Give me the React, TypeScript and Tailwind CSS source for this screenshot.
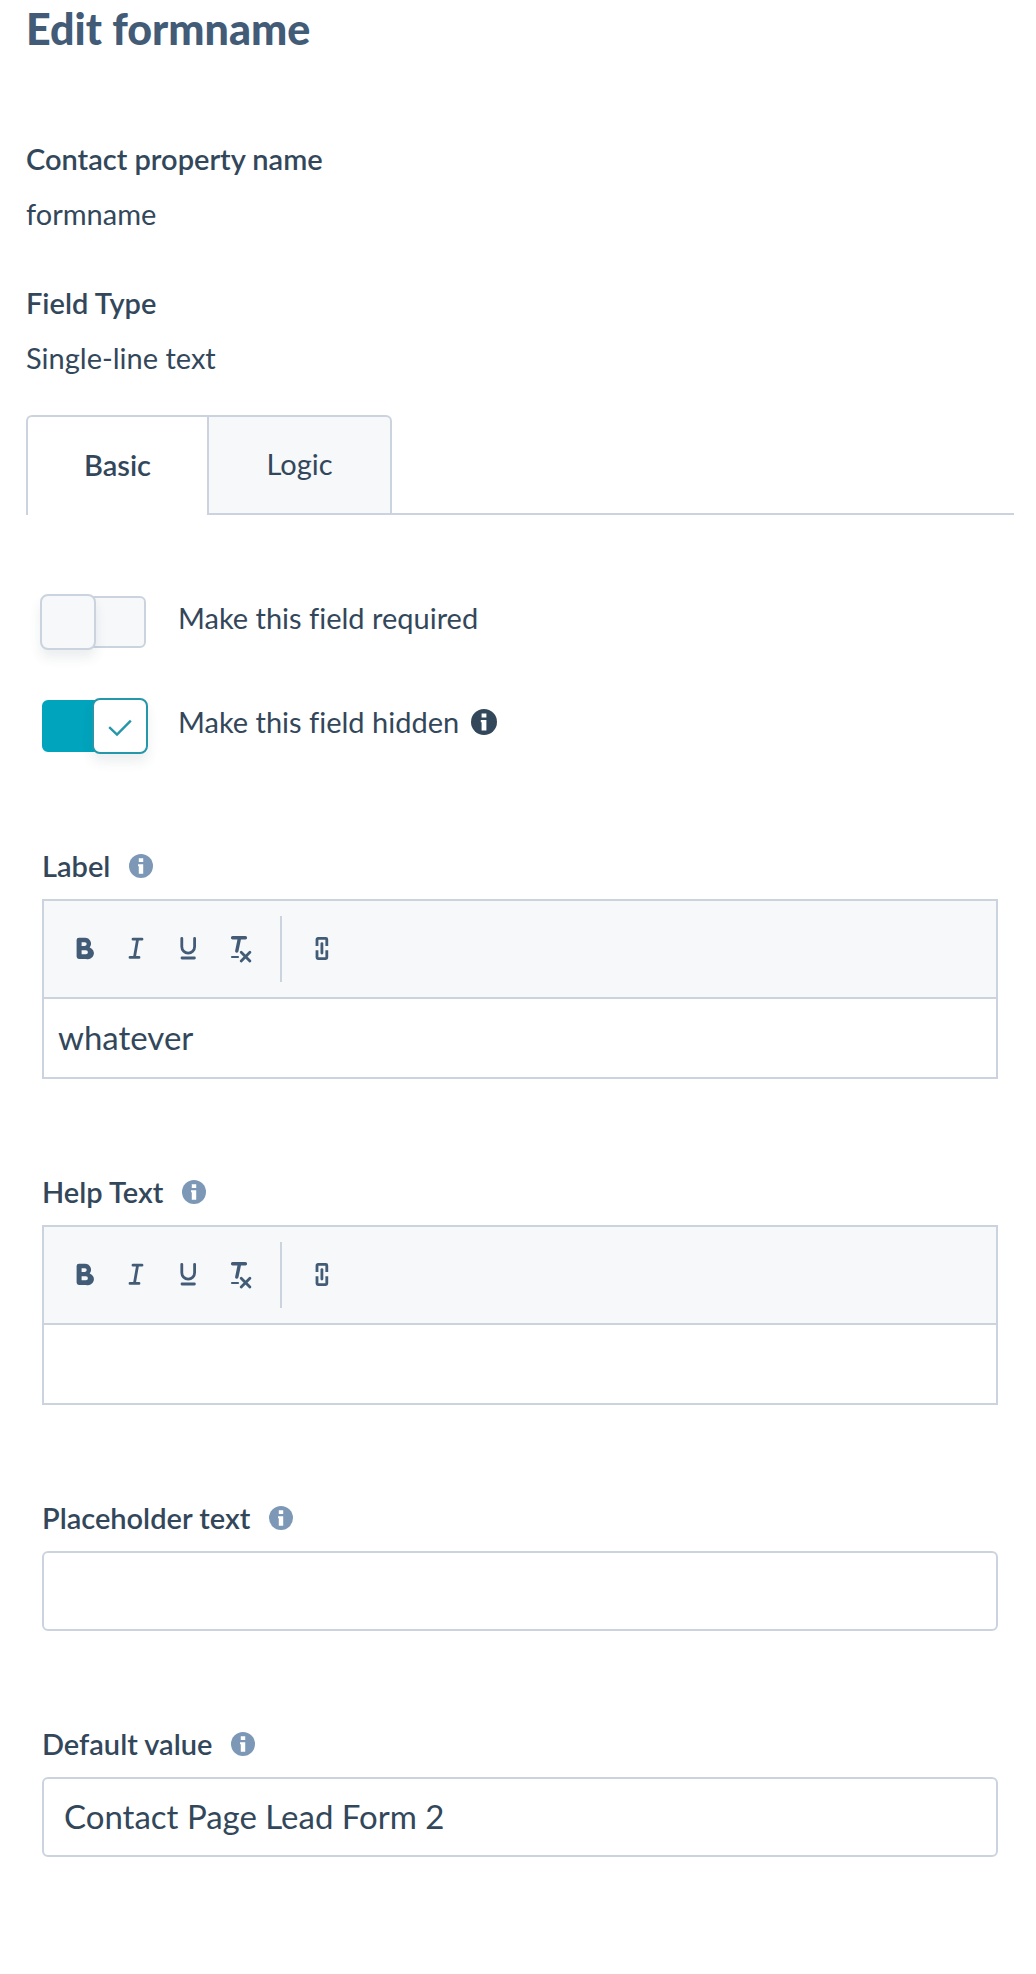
import { useState, type ReactNode } from "react";

function InfoIcon({ className }: { className: string }) {
  return (
    <svg viewBox="0 0 26 26" className={className} aria-hidden="true">
      <circle cx="13" cy="13" r="13" fill="currentColor" />
      <path d="M10.600 4.600h4.800v4h-4.800zM9.800 11h5.600v10.400h-4.800v-8.200h-.8z" fill="#fff" />
    </svg>
  );
}

function Property({ name, value }: { name: string; value: string }) {
  return (
    <div>
      <dt className="font-semibold">{name}</dt>
      <dd>{value}</dd>
    </div>
  );
}

function Toggle({
  id,
  label,
  initial,
  children,
}: {
  id: string;
  label: string;
  initial: boolean;
  children?: ReactNode;
}) {
  const [on, setOn] = useState(initial);
  return (
    <div className="flex items-start gap-[30px]">
      <div className="relative h-14 w-[108px] shrink-0 p-0.5">
        <input
          id={id}
          type="checkbox"
          checked={on}
          onChange={() => setOn(!on)}
          className="block h-[52px] w-[104px] cursor-pointer appearance-none rounded-md border-2 border-[#cbd4de] bg-[#f6f8fa] checked:border-[#00a4bd] checked:bg-[#00a4bd]"
        />
        {on ? (
          <span className="pointer-events-none absolute top-0 right-0 flex size-14 items-center justify-center rounded-lg border-2 border-[#2497aa] bg-white shadow-[0_8px_12px_rgba(45,62,80,0.09)]">
            <svg viewBox="0 0 24 18" className="mt-1 h-[18px] w-6 text-[#2497aa]" fill="none" stroke="currentColor" strokeWidth="2.4" aria-hidden="true">
              <path d="M1.2 8.2 9 15.6 22.8 1.6" />
            </svg>
          </span>
        ) : (
          <span className="pointer-events-none absolute top-0 left-0 size-14 rounded-lg border-2 border-[#cbd4de] bg-[#f6f8fa] shadow-[0_8px_12px_rgba(45,62,80,0.09)]" />
        )}
      </div>
      <div className="flex items-center gap-3 leading-[48px]">
        <label htmlFor={id}>{label}</label>
        {children}
      </div>
    </div>
  );
}

function FieldLabel({ htmlFor, children }: { htmlFor: string; children: string }) {
  return (
    <div className="mb-[11px] flex items-center gap-[19px] leading-[44px]">
      <label htmlFor={htmlFor} className="font-semibold">
        {children}
      </label>
      <button type="button" aria-label={`About ${children}`} className="text-[#7c98b6]">
        <InfoIcon className="size-6" />
      </button>
    </div>
  );
}

const tools = [
  {
    name: "Bold",
    icon: (
      <path
        fill="currentColor"
        fillRule="evenodd"
        stroke="none"
        d="M8 1.700h6a6 6 0 0 1 4.700 9.700A6 6 0 0 1 15 22.900H8a2.400 2.400 0 0 1-2.400-2.400V4.100A2.400 2.400 0 0 1 8 1.700zM10.600 6.300v3.600h3.300a1.800 1.800 0 0 0 0-3.600zM10.600 14.300v4h4.300a2 2 0 0 0 0-4z"
      />
    ),
  },
  {
    name: "Italic",
    icon: <path d="M10 3.200h9M7 21.400h9M14.600 3.200l-3.200 18.200" strokeWidth="2.800" />,
  },
  {
    name: "Underline",
    icon: <path d="M6.800 2.300v8.500a6.400 6.400 0 0 0 12.800 0V2.300M7 22h12.400" strokeWidth="2.800" />,
  },
  {
    name: "Clear formatting",
    icon: (
      <>
        <path d="M5.600 1.700h12.800M12.600 1.700l-2.800 13.300" strokeWidth="3.400" />
        <path d="M5 21h6" strokeWidth="2.200" />
        <path d="m14.200 16.300 8.700 8.800M22.900 16.300l-8.700 8.800" strokeWidth="2.800" />
      </>
    ),
  },
];

function Editor({ id, label, value }: { id: string; label: string; value: string }) {
  return (
    <section>
      <FieldLabel htmlFor={id}>{label}</FieldLabel>
      <div className="border-2 border-[#cbd4de]">
        <div
          role="toolbar"
          aria-label={`${label} formatting`}
          className="flex h-[98px] items-center border-b-2 border-[#cbd4de] bg-[#f6f8fa] pl-[14px] text-[#425b76]"
        >
          {tools.map((tool) => (
            <button key={tool.name} type="button" aria-label={tool.name} className="flex h-12 w-[52px] items-center justify-center">
              <svg viewBox="0 0 26 26" className="size-[26px] overflow-visible" fill="none" stroke="currentColor" strokeLinecap="round" strokeLinejoin="round" aria-hidden="true">
                {tool.icon}
              </svg>
            </button>
          ))}
          <span className="mr-[14px] ml-[14px] h-[66px] w-0.5 bg-[#cbd4de]" />
          <button type="button" aria-label="Link" className="flex h-12 w-[52px] items-center justify-center">
            <svg viewBox="0 0 26 26" className="size-[26px]" fill="none" stroke="currentColor" strokeWidth="2.800" strokeLinejoin="round" aria-hidden="true">
              <path d="M8 10V3.400a1 1 0 0 1 1-1h7.800a1 1 0 0 1 1 1V10M8 14.200v7.400a1 1 0 0 0 1 1h7.800a1 1 0 0 0 1-1v-7.400" />
              <path d="M12.900 7.600v9.400" strokeLinecap="round" />
            </svg>
          </button>
        </div>
        <input id={id} type="text" defaultValue={value} className="block h-[78px] w-full bg-white px-[14px] pb-0.5 text-[33px] outline-none" />
      </div>
    </section>
  );
}

function TextField({ id, label, value }: { id: string; label: string; value: string }) {
  return (
    <section>
      <FieldLabel htmlFor={id}>{label}</FieldLabel>
      <input
        id={id}
        type="text"
        defaultValue={value}
        className="block h-20 w-full rounded-md border-2 border-[#cbd4de] bg-white px-5 pb-0.5 text-[33px] outline-none"
      />
    </section>
  );
}

export default function App() {
  const [tab, setTab] = useState("Basic");
  return (
    <main className="min-h-screen bg-white pt-[3px] pr-[22px] pb-[114px] pl-[26px] font-[Lato,sans-serif] text-[29px] text-[#33475b] [font-variant-ligatures:none]">
      <h1 className="text-[43px] leading-[52px] font-black text-[#425b76]">Edit formname</h1>

      <dl className="mt-[76px] flex flex-col gap-[34px] leading-[55px]">
        <Property name="Contact property name" value="formname" />
        <Property name="Field Type" value="Single-line text" />
      </dl>

      <div role="tablist" className="mt-[30px] flex h-[100px]">
        <button
          type="button"
          role="tab"
          aria-selected={tab === "Basic"}
          onClick={() => setTab("Basic")}
          className="w-[181px] rounded-tl-md border-2 border-r-0 border-[#cbd4de] bg-[#f6f8fa] pb-0.5 aria-selected:border-b-0 aria-selected:bg-white aria-selected:font-semibold"
        >
          Basic
        </button>
        <button
          type="button"
          role="tab"
          aria-selected={tab === "Logic"}
          onClick={() => setTab("Logic")}
          className="w-[185px] rounded-tr-md border-2 border-[#cbd4de] bg-[#f6f8fa] pb-0.5 aria-selected:border-b-0 aria-selected:bg-white aria-selected:font-semibold"
        >
          Logic
        </button>
        <div className="grow border-b-2 border-[#cbd4de]" />
      </div>

      <form className="px-4 pt-[79px]">
        <div className="-ml-0.5 flex flex-col gap-12">
          <Toggle id="required" label="Make this field required" initial={false} />
          <Toggle id="hidden" label="Make this field hidden" initial={true}>
            <button type="button" aria-label="About hidden fields">
              <InfoIcon className="size-[26px]" />
            </button>
          </Toggle>
        </div>

        <div className="mt-[90px] flex flex-col gap-[91px]">
          <Editor id="label" label="Label" value="whatever" />
          <Editor id="help" label="Help Text" value="" />
          <TextField id="placeholder" label="Placeholder text" value="" />
          <TextField id="default" label="Default value" value="Contact Page Lead Form 2" />
        </div>
      </form>
    </main>
  );
}
